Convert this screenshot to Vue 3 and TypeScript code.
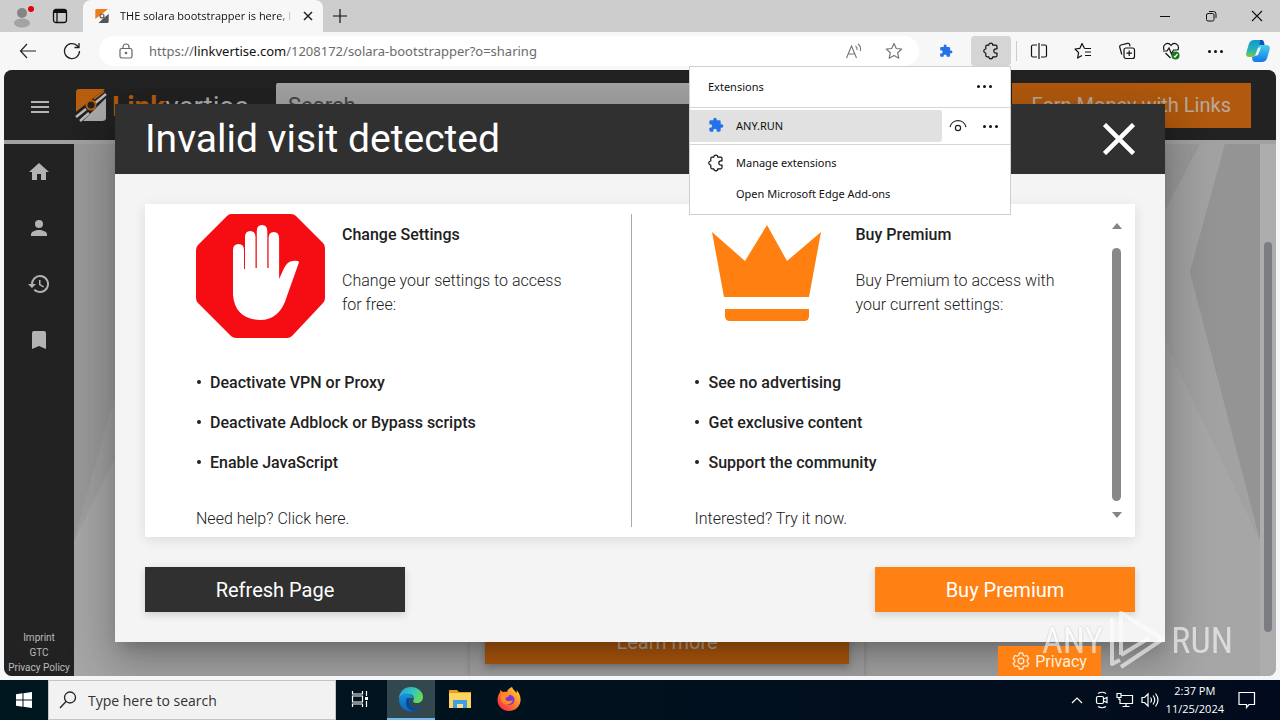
<script setup lang="ts">
import { ref } from 'vue'

interface Column {
  title: string
  text: string[]
  points: string[]
}

const url = { scheme: 'https://', host: 'linkvertise.com', path: '/1208172/solara-bootstrapper?o=sharing' }
const search = ref('')
const taskSearch = ref('')
const left: Column = {
  title: 'Change Settings',
  text: ['Change your settings to access', 'for free:'],
  points: ['Deactivate VPN or Proxy', 'Deactivate Adblock or Bypass scripts', 'Enable JavaScript'],
}
const right: Column = {
  title: 'Buy Premium',
  text: ['Buy Premium to access with', 'your current settings:'],
  points: ['See no advertising', 'Get exclusive content', 'Support the community'],
}
const legal = ['Imprint', 'GTC', 'Privacy Policy']
</script>

<template>
  <div class="desktop">
    <header class="tabs">
      <button class="profile" aria-label="Profile">
        <svg width="24" height="28" viewBox="0 0 24 28"><circle cx="11" cy="11" r="5" fill="#858585" /><ellipse cx="11" cy="21" rx="8" ry="4.500" fill="#a3a3a3" /><circle cx="20" cy="7" r="3" fill="#e3000f" /></svg>
      </button>
      <button class="workspaces" aria-label="Tab actions">
        <svg width="16" height="16" viewBox="0 0 16 16" fill="none" stroke="#111" stroke-width="1.300"><rect x="1.500" y="1.500" width="13" height="13" rx="2.500" /><path d="M2 3.500h12" stroke-width="3" /><path d="M5 3v11" /></svg>
      </button>
      <div class="tab">
        <svg width="16" height="16" viewBox="0 0 34 36"><path d="M5 2h26L2 25V5q0-3 3-3z" fill="#f07c15" /><path d="M32 11v20q0 3-4 3H9z" fill="#555" /><path d="M2 28 31 5M5 33 32 11" stroke="#fff" stroke-width="3" /><circle cx="17" cy="18" r="4.500" fill="#eee" stroke="#555" stroke-width="2.500" /></svg>
        <span class="tab-title">THE solara bootstrapper is here, l</span>
        <button class="tab-close" aria-label="Close tab"><svg width="10" height="10" viewBox="0 0 10 10"><path d="M1 1l8 8M9 1l-8 8" stroke="#222" stroke-width="1.500" /></svg></button>
      </div>
      <button class="new-tab" aria-label="New tab"><svg width="14" height="14" viewBox="0 0 14 14"><path d="M7 0v14M0 7h14" stroke="#111" stroke-width="1.200" /></svg></button>
      <div class="window-buttons">
        <button aria-label="Minimize"><svg width="12" height="12" viewBox="0 0 12 12"><path d="M1 6.500h10" stroke="#111" /></svg></button>
        <button aria-label="Restore"><svg width="12" height="12" viewBox="0 0 12 12" fill="none" stroke="#111"><rect x="1.500" y="3.500" width="7.500" height="7.500" rx="1.500" /><path d="M4 1.500h4.500q2.500 0 2.500 2.500v4" /></svg></button>
        <button aria-label="Close"><svg width="12" height="12" viewBox="0 0 12 12"><path d="M1 1l10 10M11 1 1 11" stroke="#111" stroke-width="1.100" /></svg></button>
      </div>
    </header>

    <nav class="toolbar">
      <button class="nav-btn" aria-label="Back"><svg width="18" height="16" viewBox="0 0 18 16" fill="none" stroke="#222" stroke-width="1.200"><path d="M17 8H1.500M8 1 1.500 8 8 15" /></svg></button>
      <button class="nav-btn" aria-label="Reload"><svg width="18" height="18" viewBox="0 0 18 18" fill="none" stroke="#222" stroke-width="1.300"><path d="M16.500 9A7.500 7.500 0 1 1 14 3.500L16 5.500M16 1v4.500h-4.500" /></svg></button>
      <div class="address">
        <svg width="14" height="16" viewBox="0 0 14 16" fill="none" stroke="#666" stroke-width="1.200"><rect x="1" y="5.500" width="12" height="9.500" rx="1.800" /><path d="M4 5.500V4a3 3 0 0 1 6 0v1.500" /><circle cx="7" cy="10" r=".7" fill="#666" /></svg>
        <span class="url">{{ url.scheme }}<b>{{ url.host }}</b>{{ url.path }}</span>
        <button aria-label="Read aloud"><svg width="18" height="16" viewBox="0 0 18 16" fill="none" stroke="#777" stroke-width="1.100"><path d="M1.500 15 6.500 3l5 12M3.200 11h6.600M10.500 3q2 1.500 1.500 4M13 1q3.500 2.800 2.300 7" /></svg></button>
        <button aria-label="Add to favorites"><svg width="18" height="18" viewBox="0 0 18 18" fill="none" stroke="#777" stroke-width="1.200" stroke-linejoin="round"><path d="M9 1.500l2.300 5 5.400.6-4 3.700 1.100 5.400L9 13.500l-4.800 2.700 1.100-5.400-4-3.700 5.400-.6z" /></svg></button>
      </div>
      <button class="any-ext" aria-label="ANY.RUN"><svg width="14" height="14" viewBox="0 0 24 24" fill="#2472e8"><path d="M20.500 11H19V7a2 2 0 0 0-2-2h-4V3.500a2.500 2.500 0 0 0-5 0V5H4a2 2 0 0 0-2 2v3.800h1.500a2.700 2.700 0 0 1 0 5.400H2V20a2 2 0 0 0 2 2h3.800v-1.500a2.700 2.700 0 0 1 5.400 0V22H17a2 2 0 0 0 2-2v-4h1.500a2.500 2.500 0 0 0 0-5z" /></svg></button>
      <div class="ext-anchor">
        <button class="ext-button" aria-label="Extensions"><svg width="18" height="18" viewBox="0 0 18 18" fill="none" stroke="#111" stroke-width="1.200" stroke-linejoin="round"><path d="M6.800 3.200a2 2 0 0 1 4 0h3q1.200 0 1.200 1.200v2.400h-1a2.200 2.200 0 0 0 0 4.400h1v2.400q0 1.200-1.200 1.200h-3a2 2 0 0 1-4 0H5q-1.200 0-1.200-1.200V11a2 2 0 0 1 0-4V4.400q0-1.200 1.200-1.200z" /></svg></button>
        <section class="ext-menu">
          <div class="ext-head"><span>Extensions</span><button aria-label="More options" class="dots"><i></i><i></i><i></i></button></div>
          <div class="ext-row">
            <button class="ext-item"><svg width="16" height="16" viewBox="0 0 24 24" fill="#2472e8"><path d="M20.500 11H19V7a2 2 0 0 0-2-2h-4V3.500a2.500 2.500 0 0 0-5 0V5H4a2 2 0 0 0-2 2v3.800h1.500a2.700 2.700 0 0 1 0 5.400H2V20a2 2 0 0 0 2 2h3.800v-1.500a2.700 2.700 0 0 1 5.400 0V22H17a2 2 0 0 0 2-2v-4h1.500a2.500 2.500 0 0 0 0-5z" /></svg><span>ANY.RUN</span></button>
            <button class="eye" aria-label="Show in toolbar"><svg width="18" height="14" viewBox="0 0 18 14" fill="none" stroke="#222" stroke-width="1.200"><path d="M1 8a8.200 8.200 0 0 1 16 0" /><circle cx="9" cy="9" r="2.600" /></svg></button>
            <button aria-label="More actions" class="dots"><i></i><i></i><i></i></button>
          </div>
          <button class="ext-link"><svg width="18" height="18" viewBox="0 0 18 18" fill="none" stroke="#111" stroke-width="1.200" stroke-linejoin="round"><path d="M6.800 3.200a2 2 0 0 1 4 0h3q1.200 0 1.200 1.200v2.400h-1a2.200 2.200 0 0 0 0 4.400h1v2.400q0 1.200-1.200 1.200h-3a2 2 0 0 1-4 0H5q-1.200 0-1.200-1.200V11a2 2 0 0 1 0-4V4.400q0-1.200 1.200-1.200z" /></svg><span>Manage extensions</span></button>
          <button class="ext-link"><span class="ext-gap"></span><span>Open Microsoft Edge Add-ons</span></button>
        </section>
      </div>
      <div class="tools">
        <button aria-label="Split screen"><svg width="18" height="18" viewBox="0 0 18 18" fill="none" stroke="#111" stroke-width="1.200"><path d="M7 3H3Q1.500 3 1.500 4.500v9Q1.500 15 3 15h4M11 3h4q1.500 0 1.500 1.500v9Q16.500 15 15 15h-4M9 1v16" /></svg></button>
        <button aria-label="Favorites"><svg width="18" height="18" viewBox="0 0 18 18" fill="none" stroke="#111" stroke-width="1.200" stroke-linejoin="round"><path d="M10.500 6.500 8 1.500 5.800 6.400 1 7l3.600 3.700-1 5.400L8 13.500M10.500 6.500H17M11 10h6M11 13.500h6" /></svg></button>
        <button aria-label="Collections"><svg width="18" height="18" viewBox="0 0 18 18" fill="none" stroke="#111" stroke-width="1.200"><rect x="6" y="6" width="10.500" height="10.500" rx="2" /><path d="M11.200 8.500v5.500M8.500 11.200H14M3.800 12.500 1.700 5q-.3-1.600 1.200-2L9.500 1.300q1.500-.3 2 1l.6 2" /></svg></button>
        <button aria-label="Browser essentials"><svg width="18" height="18" viewBox="0 0 18 18" fill="none" stroke="#111" stroke-width="1.200"><path d="M2 8C0 2 6-.5 9 3.500 12-.5 18 2 16 8M3.500 11 8.500 16M1 9h4l2-3 2.500 6 2-4H16" /><circle cx="13.500" cy="13.500" r="4" fill="#137a1b" stroke="none" /><path d="m12 14 1 1 2.500-3" stroke="#fff" /></svg></button>
        <button aria-label="Settings and more" class="dots wide"><i></i><i></i><i></i></button>
      </div>
      <button class="copilot" aria-label="Copilot">
        <svg width="24" height="24" viewBox="0 0 24 24"><defs><linearGradient id="cpA" x1="0" y1="0" x2="0" y2="1"><stop offset="0" stop-color="#1795d4" /><stop offset=".6" stop-color="#24b5b5" /><stop offset="1" stop-color="#8ac83e" /></linearGradient><linearGradient id="cpB" x1="0" y1="0" x2="0" y2="1"><stop offset="0" stop-color="#49d0e8" /><stop offset="1" stop-color="#1377ee" /></linearGradient></defs><path d="M8 1h7q2 0 2.700 2.500L18 6h-2q-3 0-4 3l-2 6q-1 3-4 3H3q-4 0-2.500-5L3 4.500Q4.500 1 8 1z" fill="url(#cpA)" /><path d="M16 23H9q-2 0-2.700-2.500L6 18q3 0 4-3l2-6q1-3 4-3h4q5 0 3.500 5L21 19.500Q19.500 23 16 23z" fill="url(#cpB)" /><path d="M14 1h2q2 0 2.500 5h-5z" fill="#0757b5" /><path d="M12 9l3-1-3 8-3 1z" fill="#effcff" /></svg>
      </button>
    </nav>

    <main class="page">
      <header class="site-head">
        <button class="burger" aria-label="Menu"><i></i><i></i><i></i></button>
        <a class="brand" href="#" aria-label="Linkvertise">
          <svg width="34" height="36" viewBox="0 0 34 36"><path d="M5 2h26L2 25V5q0-3 3-3z" fill="#b75f0e" /><path d="M32 11v20q0 3-4 3H9z" fill="#ababab" /><path d="M1 27 32 3M2 33 32 9" stroke="#222" stroke-width="2" /><path d="M2 30 12 22M6 34l9-8M20 17 32 7" stroke="#bbb" stroke-width="2.500" /><path d="M20 12 30 4" stroke="#b75f0e" stroke-width="2" /><circle cx="17" cy="18" r="4.500" fill="#222" stroke="#b75f0e" stroke-width="2" /></svg>
          <span><b>Link</b>vertise</span>
        </a>
        <input v-model="search" class="site-search" type="text" placeholder="Search" aria-label="Search">
        <button class="earn">Earn Money with Links</button>
      </header>
      <div class="progress"></div>
      <div class="site-body">
        <aside class="side">
          <a href="#" aria-label="Home"><svg width="24" height="24" viewBox="0 0 24 24" fill="#b3b3b3"><path d="M10 20v-6h4v6h5v-8h3L12 3 2 12h3v8z" /></svg></a>
          <a href="#" aria-label="Account"><svg width="24" height="24" viewBox="0 0 24 24" fill="#b3b3b3"><circle cx="12" cy="8" r="4" /><path d="M4 20v-1.500C4 15.500 8.500 14 12 14s8 1.500 8 4.500V20z" /></svg></a>
          <a href="#" aria-label="History"><svg width="24" height="24" viewBox="0 0 24 24" fill="#b3b3b3"><path d="M13 3a9 9 0 0 0-9 9H1l3.900 3.900.1.100L9 12H6a7 7 0 1 1 2 4.900l-1.400 1.400A9 9 0 1 0 13 3zm-1 5v5l4.300 2.500.7-1.200-3.500-2.100V8z" /></svg></a>
          <a href="#" aria-label="Bookmarks"><svg width="24" height="24" viewBox="0 0 24 24" fill="#b3b3b3"><path d="M17 3H7a2 2 0 0 0-2 2v16l7-3 7 3V5a2 2 0 0 0-2-2z" /></svg></a>
          <div class="legal"><a v-for="item in legal" :key="item" href="#">{{ item }}</a></div>
        </aside>
        <div class="content">
          <svg class="facets" viewBox="0 0 1186 532" preserveAspectRatio="none"><path d="M0 0h1186v532H0z" fill="#999" /><path d="M60 184 0 396 60 276z" fill="#9f9f9f" /><path d="M60 276 0 396v136h1186V396l-95-120z" fill="#a6a6a6" /><path d="M1091 196 1186 396v136h-200z" fill="#a6a6a6" /><path d="M1126 0h25l-35 128 70 268-95-200V66z" fill="#a2a2a2" /><path d="M1151 0h35v396L1116 128z" fill="#949494" /></svg>
          <div class="offer"><button>Learn more</button></div>
        </div>
        <div class="page-scroll"><div class="page-thumb"></div></div>
      </div>

      <div class="overlay">
        <section class="modal" role="dialog" aria-labelledby="modal-title">
          <header class="modal-head">
            <h1 id="modal-title">Invalid visit detected</h1>
            <button aria-label="Close dialog"><svg width="32" height="32" viewBox="0 0 32 32"><path d="M1.500 1.500l29 29M30.500 1.500l-29 29" stroke="#fff" stroke-width="4.500" /></svg></button>
          </header>
          <div class="modal-body">
            <div class="card">
              <div class="column first">
                <div class="lead">
                  <svg width="129" height="124" viewBox="0 0 129 124"><path d="M35 0h60q3 0 5 2l27 27q2 2 2 5v50q0 3-2 5l-31 33q-2 2-5 2H40q-3 0-5-2L2 89q-2-2-2-5V36q0-3 2-5L31 2q2-2 4-2z" fill="#f60d14" /><path d="M37 36q0-6 5.500-6t5.500 6v19h1V23q0-6 5.200-6t5.300 6v31h1.300V17q0-6 5.200-6t5.300 6v37h1.300V24q0-6 5.200-6t5.300 6v41l5-11q3-6 8-7 6-1 7 1L91 82q-7 24-27 24-25-1-27-25z" fill="#fff" /></svg>
                  <div><h2>{{ left.title }}</h2><p><span v-for="t in left.text" :key="t">{{ t }}</span></p></div>
                </div>
                <ul><li v-for="p in left.points" :key="p">{{ p }}</li></ul>
                <p class="foot">Need help? <a href="#">Click here.</a></p>
              </div>
              <div class="column second">
                <div class="lead">
                  <svg width="145" height="124" viewBox="0 0 145 124" fill="#ff7f11"><path d="m18 18 33 29 22-36 20 36 34-29-12 65H30zM31 95h84v7q0 5-5 5H36q-5 0-5-5z" /></svg>
                  <div><h2>{{ right.title }}</h2><p><span v-for="t in right.text" :key="t">{{ t }}</span></p></div>
                </div>
                <ul><li v-for="p in right.points" :key="p">{{ p }}</li></ul>
                <p class="foot">Interested? <a href="#">Try it now.</a></p>
              </div>
              <div class="card-scroll">
                <svg width="10" height="6" viewBox="0 0 10 6"><path d="M0 6l5-6 5 6z" fill="#858585" /></svg>
                <div></div>
                <svg width="10" height="6" viewBox="0 0 10 6"><path d="M0 0l5 6 5-6z" fill="#858585" /></svg>
              </div>
            </div>
            <div class="actions"><button class="refresh">Refresh Page</button><button class="buy">Buy Premium</button></div>
          </div>
        </section>
      </div>

      <button class="privacy"><svg width="18" height="18" viewBox="0 0 18 18" fill="none" stroke="#ffe9cf" stroke-width="1.300" stroke-linejoin="round"><path d="M7.300 1h3.400l.6 2.300 1.500.9 2.300-.7 1.700 3L15.200 8.200v1.700l1.600 1.600-1.700 3-2.300-.7-1.500.9-.6 2.300H7.300l-.6-2.300-1.500-.9-2.300.7-1.700-3 1.600-1.600V8.200L1.200 6.500l1.700-3 2.300.7 1.500-.9z" /><circle cx="9" cy="9" r="2.800" /></svg>Privacy</button>
      <div class="watermark">
        <span>ANY</span>
        <svg width="58" height="62" viewBox="0 0 58 62" fill="none" stroke="#fff" stroke-width="4" stroke-linejoin="round"><path d="M13 45V3l42 26-42 28M13 45l28-17M4 8v46l8-4" /></svg>
        <span>RUN</span>
      </div>
    </main>

    <footer class="taskbar">
      <button class="start" aria-label="Start"><svg width="16" height="16" viewBox="0 0 16 16" fill="#fff"><path d="M0 2.300 6.500 1.300v6.200H0zM7.500 1.200 16 0v7.500H7.500zM0 8.500h6.500v6.200L0 13.700zM7.500 8.500H16V16l-8.500-1.200z" /></svg></button>
      <label class="task-search"><svg width="18" height="18" viewBox="0 0 18 18" fill="none" stroke="#222" stroke-width="1.300"><circle cx="11" cy="6.500" r="5.500" /><path d="m7 10.500-6 6.500" /></svg><input v-model="taskSearch" type="text" placeholder="Type here to search" aria-label="Type here to search"></label>
      <button class="task view" aria-label="Task view"><svg width="18" height="18" viewBox="0 0 18 18" fill="none" stroke="#fff" stroke-width="1.200"><path d="M1.500 1v3h10V1M1.500 17v-3h10v3M1.500 6h10v6h-10zM15.500 1v5M15.500 11v6" /><path d="M14 7h3v3h-3z" fill="#fff" stroke="none" /></svg></button>
      <button class="task active" aria-label="Microsoft Edge"><svg width="26" height="26" viewBox="0 0 26 26"><defs><linearGradient id="edA" x1="0" y1="0" x2="1" y2=".4"><stop offset="0" stop-color="#249be0" /><stop offset=".6" stop-color="#34c6bd" /><stop offset="1" stop-color="#63da58" /></linearGradient><linearGradient id="edB" x1="0" y1="0" x2="0" y2="1"><stop offset="0" stop-color="#1b93db" /><stop offset="1" stop-color="#0c63b7" /></linearGradient></defs><path d="M1 13C1 5.500 6.500 1 13 1s12 4.500 12 10c0 4-3 6-6.500 6-3 0-4-1.300-3-3 1-2 0-6-5-6-5 0-9 2-9.500 5z" fill="url(#edA)" /><path d="M1 13c1-4 5-6 8.500-5.500C13 8 15 10 15 12c-3 0-4 3-3 6 1.500 4 7 5 11 2-2 3.500-6 5.500-10 5.500C6 25.500 1 20 1 13z" fill="url(#edB)" /><path d="M9 12c-3 6 0 12 7 13 3-.5 5.500-2.500 7-5-4 3-9.500 2-11-2-1-2.500-.5-5 1.500-6z" fill="#0b4a93" /></svg></button>
      <button class="task" aria-label="File Explorer"><svg width="24" height="22" viewBox="0 0 24 22"><path d="M1 2h8l2 2h12v4H1z" fill="#e8a018" /><path d="M1 5h22v15H1z" fill="#fcd462" /><path d="M5 20v-8h14v8h-4v-4H9v4z" fill="#3f9ee0" /><path d="M9 20v-4h6v4z" fill="#f2dd9b" /></svg></button>
      <button class="task" aria-label="Firefox"><svg width="24" height="26" viewBox="0 0 24 26"><defs><linearGradient id="ffA" x1="1" y1="0" x2="0" y2="1"><stop offset="0" stop-color="#ffe33f" /><stop offset=".5" stop-color="#ff7a2a" /><stop offset="1" stop-color="#f5174f" /></linearGradient></defs><path d="M15 1c1 3 3 3.500 4.500 6 .5-1 .3-2 0-3 3 3 4.500 7 4 11-.7 6-5.500 10-11.500 10S.5 20.500.5 14C.5 10 2 7.500 3 6.500l.5-3c.5 1 1.500 2 2.500 2.500 1.500-.5 3-.5 4 0C10.500 4 12.500 2 15 1z" fill="url(#ffA)" /><circle cx="12.500" cy="14" r="5" fill="#7b35dc" /><path d="M4 8c3-2 7-.5 7.500 1 2 1-1 2-2.500 2.500-1 1-.5 3 2 3.500 2 .4 4-1 5-.5-1 3-5 5-8.500 3.500C4 16 3 12 4 8z" fill="#ff8a22" /></svg></button>
      <div class="tray">
        <button class="up" aria-label="Show hidden icons"><svg width="12" height="8" viewBox="0 0 12 8"><path d="m1 7 5-5 5 5" fill="none" stroke="#fff" stroke-width="1.200" /></svg></button>
        <svg width="14" height="18" viewBox="0 0 14 18" fill="none" stroke="#fff" stroke-width="1.200"><rect x="1.500" y="5.500" width="7" height="7" rx="1.500" /><path d="M8.500 8 12 6.500v5L8.500 10M3 2.500q4-2.500 8 0M3 15.500q4 2.500 8 0" /></svg>
        <svg width="18" height="16" viewBox="0 0 18 16" fill="none" stroke="#fff" stroke-width="1.200"><path d="M5 3.500h11.500v8H4V7M10 11.500V15M6.500 14.500h7M1 1.500h4v4H1zM3 5.500V8" /></svg>
        <svg width="18" height="16" viewBox="0 0 18 16" fill="none" stroke="#fff" stroke-width="1.200"><path d="M1 5.500h2.500L7 2v12l-3.500-3.500H1zM9.500 5.500q2 2.500 0 5M12 3.500q3.500 4.500 0 9M14.500 1.500q5 6.500 0 13" /></svg>
        <div class="clock"><span>2:37 PM</span><span>11/25/2024</span></div>
        <button class="notes" aria-label="Notifications"><svg width="18" height="18" viewBox="0 0 18 18"><path d="M1 1.500h15.500v12H11l-2.500 3v-3H1z" fill="none" stroke="#fff" stroke-width="1.200" /></svg></button>
      </div>
    </footer>
  </div>
</template>

<style>
html, body { background: #f5f6f7; }
</style>

<style scoped>
* { box-sizing: border-box; }
button { border: 0; padding: 0; background: none; color: inherit; font: inherit; display: flex; align-items: center; justify-content: center; flex: none; }
a { color: inherit; text-decoration: none; }
svg { display: block; flex: none; }
h1, h2, p, ul { margin: 0; padding: 0; font-weight: 400; }
input { border: 0; outline: 0; min-width: 0; background: none; font: inherit; }
.desktop { height: 100vh; display: flex; flex-direction: column; overflow: hidden; background: #f5f6f7; font-family: "Open Sans", "Noto Sans", sans-serif; font-size: 12px; color: #111; }

.tabs { height: 32px; flex: none; display: flex; align-items: center; background: #cdcdcd; }
.profile { margin-left: 11px; width: 24px; }
.workspaces { margin-left: 17px; width: 16px; }
.tab { align-self: stretch; margin-left: 15px; width: 240px; padding: 0 10px 0 11px; display: flex; align-items: center; background: #f7f7f7; border-radius: 8px 8px 0 0; }
.tab-title { margin-left: 10px; flex: 1; min-width: 0; overflow: hidden; white-space: nowrap; font-size: 11px; line-height: 20px; -webkit-mask-image: linear-gradient(90deg, #000 92%, transparent); mask-image: linear-gradient(90deg, #000 92%, transparent); }
.tab-close { width: 10px; margin-left: 10px; }
.new-tab { margin-left: 10px; }
.window-buttons { margin-left: auto; display: flex; }
.window-buttons button { width: 46px; height: 32px; }

.toolbar { position: relative; z-index: 5; height: 38px; flex: none; display: flex; align-items: center; background: #f7f7f7; }
.nav-btn { width: 44px; height: 32px; }
.nav-btn:first-child { margin-left: 6px; }
.address { flex: 1; height: 30px; margin-left: 5px; padding: 0 16px 0 20px; display: flex; align-items: center; background: #fff; border-radius: 16px; }
.url { flex: 1; margin-left: 16px; font-family: "Noto Sans", "Open Sans", sans-serif; font-size: 13px; color: #6b6b6b; white-space: nowrap; overflow: hidden; }
.url b { font-weight: 400; color: #111; }
.address button { margin-left: 22px; }
.any-ext { width: 52px; padding-left: 2px; }
.ext-anchor { position: relative; }
.ext-button { width: 40px; height: 30px; background: #d5d5d5; border-radius: 4px; }
.ext-menu { position: absolute; top: 30px; right: 0; width: 322px; height: 149px; background: #fff; border: 1px solid #d0d0d0; font-family: "Noto Sans", "Open Sans", sans-serif; font-size: 11px; }
.ext-head { height: 41px; display: flex; align-items: center; justify-content: space-between; padding: 0 18px 2px; border-bottom: 1px solid #d6d6d6; }
.ext-row { height: 37px; display: flex; align-items: center; border-bottom: 1px solid #d6d6d6; }
.ext-item { flex: 1; height: 32px; justify-content: flex-start; gap: 12px; padding: 0 0 2px 18px; background: #e1e1e1; border-radius: 0 3px 3px 0; }
.eye { width: 32px; }
.ext-row .dots { width: 32px; margin-right: 4px; }
.ext-link { width: 100%; height: 31px; justify-content: flex-start; gap: 11px; padding-left: 17px; }
.ext-row + .ext-link { margin-top: 2px; }
.ext-gap { width: 18px; }
.dots { gap: 3px; height: 24px; }
.dots i { width: 3px; height: 3px; border-radius: 50%; background: #111; }
.tools { display: flex; margin-left: 5px; border-left: 1px solid #ccc; }
.tools button { width: 44px; height: 20px; }
.copilot { width: 43px; padding-right: 1px; }

.page { position: relative; flex: 1; min-height: 0; margin: 0 4px 4px; border-radius: 8px; overflow: hidden; display: flex; flex-direction: column; background: #999; font-family: Roboto, sans-serif; }
.site-head { height: 70px; flex: none; padding: 0 25px 0 26px; display: flex; align-items: center; background: #222; }
.burger { width: 20px; flex-direction: column; gap: 3px; margin-top: 4px; }
.burger i { width: 18px; height: 2px; background: #b3b3b3; }
.brand { width: 202px; margin-left: 24px; display: flex; align-items: center; gap: 4px; font-size: 28px; color: #aaa; flex: none; }
.brand span { line-height: 32px; margin-top: 4px; }
.brand b { font-weight: 700; color: #b35b0d; }
.site-search { flex: 1; height: 45px; padding: 0 12px; background: #a3a3a3; color: #444; font-size: 22px; border-radius: 2px; }
.site-search::placeholder { color: #444; opacity: 1; }
.earn { height: 45px; margin-left: 20px; padding: 0 20px; font-size: 20px; color: #b9aa9c; background: #b1590e; }
.progress { height: 4px; flex: none; background: #a1a1a1; }
.site-body { flex: 1; min-height: 0; display: flex; }
.side { width: 70px; display: flex; flex-direction: column; align-items: center; background: #222; }
.side > a { height: 56px; display: flex; align-items: center; }
.legal { margin-top: auto; padding-bottom: 1px; display: flex; flex-direction: column; align-items: center; font-size: 10px; line-height: 15px; color: #bbb; }
.content { position: relative; flex: 1; display: flex; flex-direction: column; justify-content: flex-end; align-items: center; }
.facets { position: absolute; inset: 0; width: 100%; height: 100%; }
.offer { position: relative; width: 394px; padding: 15px 15px 12px; background: #a5a5a5; box-shadow: 0 0 5px #888; }
.offer button { width: 100%; height: 45px; background: #b1590e; color: #b9aa9c; font-size: 20px; box-shadow: 0 3px 8px #777; }
.page-scroll { width: 16px; padding: 98px 4px 44px; background: #adadad; display: flex; }
.page-thumb { flex: 1; border-radius: 4px; background: #7c7c83; }

.overlay { position: absolute; inset: 0; display: flex; align-items: center; justify-content: center; }
.modal { width: 1050px; max-width: 90%; background: #f4f4f4; box-shadow: 0 11px 15px -7px rgba(0,0,0,.2), 0 24px 38px 3px rgba(0,0,0,.14), 0 9px 46px 8px rgba(0,0,0,.12); color: #212121; }
.modal-head { height: 70px; padding: 0 30px; display: flex; align-items: center; justify-content: space-between; background: #303030; color: #fff; }
.modal-head h1 { font-size: 39px; line-height: 46px; }
.modal-body { padding: 30px; }
.card { height: 333px; padding: 10px 13px 10px 0; display: grid; grid-template-columns: minmax(0, 61fr) minmax(0, 60fr) 10px; background: #fff; box-shadow: 0 3px 12px rgba(0,0,0,.1); }
.column { padding-left: 62px; overflow: hidden; font-size: 16px; }
.column p { font-weight: 300; }
.column.first { padding-left: 51px; border-right: 1px solid #aaa; }
.lead { display: flex; gap: 17px; height: 124px; line-height: 24px; }
.second .lead { gap: 16px; }
.lead h2 { margin-top: 9px; font-size: 16px; font-weight: 500; }
.lead p { margin-top: 22px; }
.lead p span { display: block; white-space: nowrap; }
ul { list-style: none; margin-top: 24px; }
li { height: 40px; display: flex; align-items: center; gap: 9px; font-weight: 500; }
li::before { content: ""; width: 4px; height: 4px; margin-left: 1px; border-radius: 50%; background: #212121; }
.foot { margin-top: 25px; line-height: 24px; }
.card-scroll { padding: 9px 0; display: flex; flex-direction: column; align-items: center; gap: 19px; }
.card-scroll svg:last-child { margin-top: -8px; }
.card-scroll div { width: 9px; flex: 1; border-radius: 5px; background: #888; }
.actions { margin-top: 30px; display: flex; justify-content: space-between; }
.actions button { width: 260px; height: 45px; color: #fff; font-size: 20px; box-shadow: 0 3px 8px rgba(0,0,0,.15); }
.refresh { background: #303030; }
.buy { background: #ff8114; }
.privacy { position: absolute; right: 175px; bottom: 0; width: 103px; height: 30px; gap: 5px; background: #ff8114; color: #fff0dd; font-size: 16px; }
.watermark { position: absolute; right: 43px; bottom: 4px; display: flex; align-items: center; gap: 5px; color: #fff; opacity: .6; font-size: 36px; font-weight: 400; line-height: 62px; pointer-events: none; font-family: "Liberation Sans Narrow", "Roboto Condensed", Roboto, sans-serif; text-shadow: 0 0 2px #999; }

.taskbar { height: 40px; flex: none; display: flex; background: linear-gradient(90deg, #00171f, #020b1d); color: #fff; }
.start { width: 48px; }
.task-search { width: 288px; padding-left: 10px; display: flex; align-items: center; gap: 9px; background: #f2f2f2; border: 1px solid #c5c5c5; }
.task-search input { flex: 1; font-size: 14px; color: #333; }
.task-search input::placeholder { color: #333; opacity: 1; }
.task { width: 48px; margin-right: 1px; border-bottom: 2px solid transparent; }
.task.view { margin-right: 3px; }
.task.active { background: #33474f; border-bottom-color: #76b9ed; }
.tray { margin-left: auto; display: flex; align-items: center; gap: 7px; }
.up { margin-right: 5px; }
.clock { display: flex; flex-direction: column; align-items: center; font-size: 11px; line-height: 18px; }
.notes { width: 49px; height: 40px; padding-left: 7px; justify-content: flex-start; }
</style>
